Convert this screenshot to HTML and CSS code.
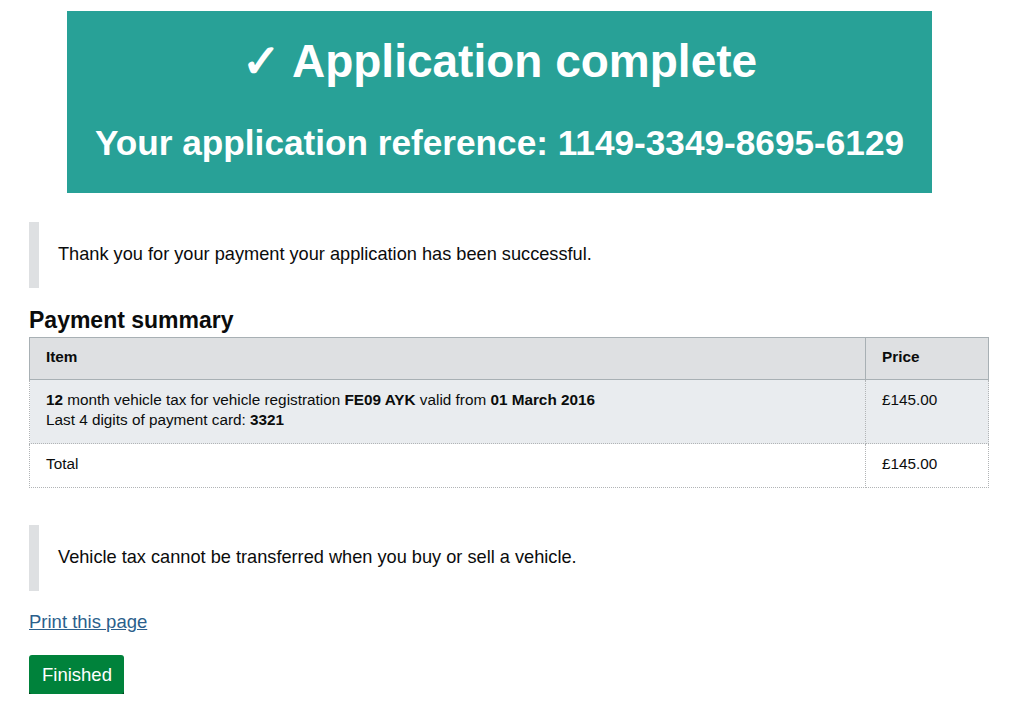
FILE: index.html
```html
<!DOCTYPE html>
<html lang="en">
<head>
<meta charset="utf-8">
<title>Application complete</title>
<link rel="stylesheet" href="styles.css">
</head>
<body>
<main class="page">
  <div class="panel">
    <h1 class="panel-title">✓ Application complete</h1>
    <p class="panel-ref">Your application reference: 1149-3349-8695-6129</p>
  </div>

  <div class="inset">
    <p>Thank you for your payment your application has been successful.</p>
  </div>

  <h2 class="summary-title">Payment summary</h2>
  <table class="summary">
    <thead>
      <tr><th class="col-item">Item</th><th class="col-price">Price</th></tr>
    </thead>
    <tbody>
      <tr class="shaded">
        <td><b>12</b> month vehicle tax for vehicle registration <b>FE09 AYK</b> valid from <b>01 March 2016</b><br>Last 4 digits of payment card: <b>3321</b></td>
        <td>£145.00</td>
      </tr>
      <tr>
        <td>Total</td>
        <td>£145.00</td>
      </tr>
    </tbody>
  </table>

  <div class="inset inset-second">
    <p>Vehicle tax cannot be transferred when you buy or sell a vehicle.</p>
  </div>

  <p class="print"><a href="#">Print this page</a></p>

  <button class="button" type="button">Finished</button>
</main>
</body>
</html>
```
FILE: styles.css
```css
html, body {
  margin: 0;
  padding: 0;
  background: #fff;
}
body {
  font-family: "Liberation Sans", Arial, sans-serif;
  color: #0b0c0c;
}
.page {
  padding: 11px 34px 0 29px;
}
.panel {
  background: #28a197;
  color: #fff;
  margin-left: 38px;
  width: 865px;
  height: 182px;
  box-sizing: border-box;
  text-align: center;
  padding-top: 22px;
}
.panel-title {
  margin: 0;
  font-size: 46px;
  line-height: 56px;
  font-weight: 700;
}
.panel-ref {
  margin: 33px 0 0;
  font-size: 35.2px;
  line-height: 42px;
  font-weight: 700;
}
.inset {
  margin-top: 29px;
  border-left: 10px solid #dee0e2;
  padding: 19px 0 21px 19px;
}
.inset p {
  margin: 0;
  font-size: 18.2px;
  line-height: 26px;
}
.summary-title {
  margin: 18px 0 3px;
  font-size: 23px;
  line-height: 28px;
  font-weight: 700;
}
.summary {
  width: 960px;
  border-collapse: collapse;
  font-size: 15.3px;
  line-height: 20px;
}
.summary th, .summary td {
  text-align: left;
  vertical-align: top;
  padding: 10px 16px 13px;
}
.summary thead th {
  background: #dee0e2;
  border: 1px solid #a8b0b4;
  font-weight: 700;
  padding-top: 9px;
  padding-bottom: 12px;
}
.summary td {
  border: 1px dotted #b1b4b6;
}
.summary .col-price {
  width: 90px;
}
.summary tr.shaded td {
  background: #e9ecef;
}
.summary td b {
  font-weight: 700;
}
.inset-second {
  margin-top: 37px;
}
.print {
  margin: 18px 0 0;
  font-size: 18.5px;
  line-height: 25px;
}
.print a {
  color: #2b5f8c;
  text-decoration: underline;
}
.button {
  margin-top: 21px;
  background: #00823b;
  color: #fff;
  border: 0;
  border-radius: 3px;
  box-shadow: 0 2px 0 #003618;
  font-family: inherit;
  font-size: 18.5px;
  line-height: 23px;
  padding: 8px 12px 8px 13px;
  cursor: pointer;
}
```
